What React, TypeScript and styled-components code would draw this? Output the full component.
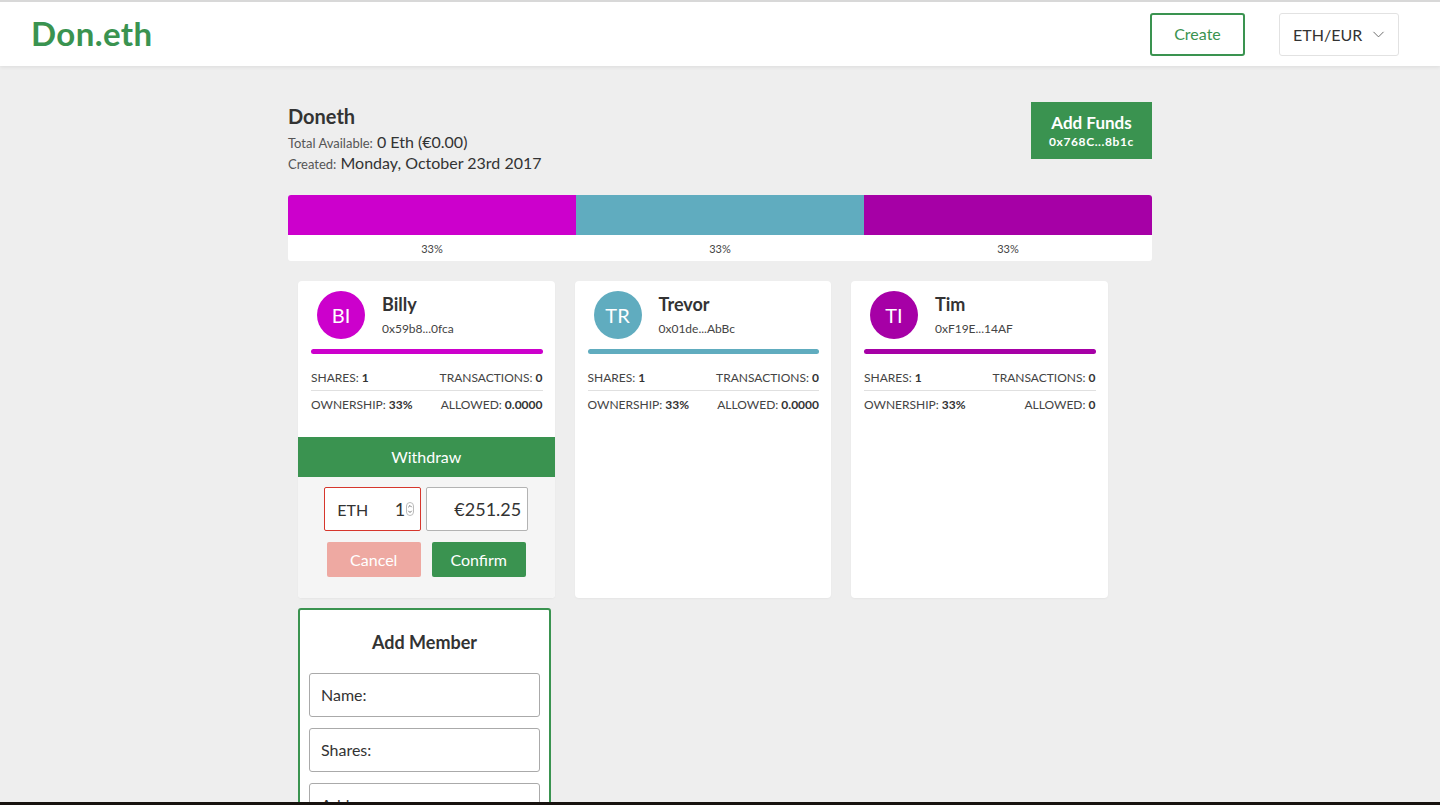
import React from 'react';
import styled, { createGlobalStyle } from 'styled-components';
import { ChevronDown } from 'lucide-react';

const GREEN = '#3a9350';

const GlobalStyle = createGlobalStyle`
  html, body {
    margin: 0;
    padding: 0;
    background: #eeeeee;
    font-family: Lato, "Open Sans", "Liberation Sans", sans-serif;
    color: #333;
  }
  * { box-sizing: border-box; }
`;

interface Member {
  name: string;
  initials: string;
  address: string;
  color: string;
  allowed: string;
  withdraw?: boolean;
}

const members: Member[] = [
  { name: 'Billy', initials: 'BI', address: '0x59b8...0fca', color: '#cc00cc', allowed: '0.0000', withdraw: true },
  { name: 'Trevor', initials: 'TR', address: '0x01de...AbBc', color: '#60acbf', allowed: '0.0000' },
  { name: 'Tim', initials: 'TI', address: '0xF19E...14AF', color: '#a600a6', allowed: '0' },
];

const Page = {
  Frame: styled.div`
    height: 100vh;
    overflow: hidden;
    background: #eeeeee;
    border-top: 2px solid #d8d8d8;
    border-bottom: 3px solid #17120f;
  `,
  Header: styled.header`
    display: flex;
    align-items: center;
    height: 64px;
    padding: 0 41px 0 31px;
    background: #fff;
    box-shadow: 0 1px 4px rgba(0, 0, 0, 0.08);
  `,
  Logo: styled.h1`
    margin: 0 0 2px;
    flex: 1;
    font-size: 33px;
    font-weight: 700;
    color: ${GREEN};
    letter-spacing: 0.4px;
  `,
  CreateButton: styled.button`
    width: 95px;
    height: 43px;
    margin-right: 34px;
    border: 2px solid ${GREEN};
    border-radius: 3px;
    background: #fff;
    color: ${GREEN};
    font-family: inherit;
    font-size: 16px;
    padding-bottom: 2px;
  `,
  Select: styled.div`
    display: flex;
    align-items: center;
    justify-content: space-between;
    width: 120px;
    height: 43px;
    padding: 0 10px 0 13px;
    border: 1px solid #e2e2e2;
    border-radius: 3px;
    font-size: 16px;
    color: #333;
  `,
  Main: styled.main`
    width: 864px;
    margin: 0 auto;
    padding-top: 36px;
  `,
};

const Summary = {
  Row: styled.div`
    display: flex;
    justify-content: space-between;
    align-items: flex-start;
  `,
  Title: styled.h2`
    margin: 0 0 2px;
    padding-top: 1px;
    font-size: 20px;
    font-weight: 700;
    line-height: 26px;
  `,
  Line: styled.div`
    height: 21px;
    font-size: 16px;
    line-height: 21px;
    color: #333;
  `,
  Label: styled.span`
    font-size: 13px;
    line-height: 1;
    color: #555;
  `,
  FundsButton: styled.div`
    display: flex;
    flex-direction: column;
    align-items: center;
    justify-content: center;
    width: 121px;
    height: 57px;
    background: ${GREEN};
    color: #fff;
  `,
  FundsTitle: styled.span`
    font-size: 17px;
    font-weight: 700;
    line-height: 22px;
  `,
  FundsAddress: styled.span`
    font-size: 12px;
    font-weight: 700;
    letter-spacing: 0.6px;
    line-height: 16px;
  `,
};

const Shares = {
  Wrap: styled.div`
    margin-top: 22px;
    border-radius: 3px;
    overflow: hidden;
    background: #fff;
  `,
  Bars: styled.div`
    display: flex;
    height: 40px;
  `,
  Segment: styled.div<{ $color: string }>`
    flex: 1;
    background: ${(p) => p.$color};
  `,
  Labels: styled.div`
    display: flex;
    height: 26px;
    align-items: center;
  `,
  Percent: styled.span`
    flex: 1;
    text-align: center;
    font-size: 11px;
    color: #444;
  `,
};

const Cards = {
  Grid: styled.div`
    display: flex;
    flex-wrap: wrap;
    padding: 15px 0 0;
  `,
  Card: styled.div`
    display: flex;
    flex-direction: column;
    width: 256.5px;
    margin: 5px 10px;
    border-radius: 4px;
    background: #fff;
    box-shadow: 0 1px 2px rgba(0, 0, 0, 0.04);
  `,
  Body: styled.div`
    padding: 10px 12px 20px 13px;
  `,
  Head: styled.div`
    display: flex;
    align-items: center;
    padding-left: 6px;
  `,
  Avatar: styled.div<{ $color: string }>`
    display: flex;
    align-items: center;
    justify-content: center;
    width: 48px;
    height: 48px;
    border-radius: 50%;
    background: ${(p) => p.$color};
    color: #fff;
    font-size: 20px;
  `,
  Who: styled.div`
    margin-left: 17px;
  `,
  Name: styled.div`
    font-size: 18px;
    font-weight: 700;
    line-height: 22px;
  `,
  Address: styled.div`
    font-size: 12px;
    line-height: 16px;
    margin-top: 6px;
    color: #444;
  `,
  ColorBar: styled.div<{ $color: string }>`
    height: 5px;
    margin-top: 10px;
    border-radius: 3px;
    background: ${(p) => p.$color};
  `,
  Stat: styled.div<{ $first?: boolean }>`
    display: flex;
    justify-content: space-between;
    align-items: center;
    height: ${(p) => (p.$first ? '28px' : '26px')};
    padding-top: ${(p) => (p.$first ? '2px' : '0')};
    margin-top: ${(p) => (p.$first ? '9px' : '0')};
    border-bottom: ${(p) => (p.$first ? '1px solid #e0e0e0' : 'none')};
    font-size: 12px;
    color: #444;
    b { color: #333; }
  `,
};

const Withdraw = {
  Wrap: styled.div`
    margin-top: auto;
    border-radius: 0 0 4px 4px;
    background: #f5f5f5;
    overflow: hidden;
  `,
  Head: styled.div`
    height: 40px;
    line-height: 40px;
    text-align: center;
    background: ${GREEN};
    color: #fff;
    font-size: 16px;
  `,
  Inputs: styled.div`
    display: flex;
    justify-content: center;
    gap: 5px;
    padding: 10px 0 11px;
  `,
  Field: styled.div<{ $error?: boolean; $width: number }>`
    display: flex;
    align-items: center;
    justify-content: space-between;
    width: ${(p) => p.$width}px;
    height: 44px;
    padding: 0 6px 0 12px;
    border: 1px solid ${(p) => (p.$error ? '#d6362c' : '#b3b3b3')};
    border-radius: 2px;
    background: #fff;
    font-size: 16px;
    color: #333;
  `,
  Amount: styled.span`
    display: flex;
    align-items: center;
    gap: 1px;
    font-size: 18px;
  `,
  Euro: styled.span`
    margin-left: auto;
    font-size: 18px;
  `,
  Buttons: styled.div`
    display: flex;
    justify-content: center;
    gap: 11px;
    padding-bottom: 21px;
  `,
  Button: styled.button<{ $variant: 'cancel' | 'confirm' }>`
    width: 94px;
    height: 35px;
    border: none;
    border-radius: 2px;
    background: ${(p) => (p.$variant === 'cancel' ? '#eea9a2' : GREEN)};
    color: #fff;
    font-family: inherit;
    font-size: 16px;
  `,
};

const AddMember = {
  Card: styled.div`
    width: 253px;
    margin: 5px 10px;
    padding: 0 9px 20px;
    border: 2px solid ${GREEN};
    border-radius: 3px;
    background: #fff;
  `,
  Title: styled.h3`
    margin: 0;
    padding: 20px 0 19px;
    text-align: center;
    font-size: 18px;
    font-weight: 700;
    line-height: 24px;
  `,
  Input: styled.div`
    height: 44px;
    margin-bottom: 11px;
    padding: 0 11px;
    border: 1px solid #aaa;
    border-radius: 3px;
    font-size: 16px;
    line-height: 42px;
    color: #333;
  `,
};

const Spinner: React.FC = () => (
  <svg width="8" height="14" viewBox="0 0 8 14">
    <rect x="0.5" y="0.5" width="7" height="13" rx="3.5" fill="#fff" stroke="#bbb" />
    <path d="M2.3 5.2 L4 3.5 L5.7 5.2" stroke="#666" strokeWidth="0.9" fill="none" />
    <path d="M2.3 8.8 L4 10.5 L5.7 8.8" stroke="#666" strokeWidth="0.9" fill="none" />
  </svg>
);

const MemberCard: React.FC<{ m: Member }> = ({ m }) => (
  <Cards.Card>
    <Cards.Body>
      <Cards.Head>
        <Cards.Avatar $color={m.color}>{m.initials}</Cards.Avatar>
        <Cards.Who>
          <Cards.Name>{m.name}</Cards.Name>
          <Cards.Address>{m.address}</Cards.Address>
        </Cards.Who>
      </Cards.Head>
      <Cards.ColorBar $color={m.color} />
      <Cards.Stat $first>
        <span>SHARES: <b>1</b></span>
        <span>TRANSACTIONS: <b>0</b></span>
      </Cards.Stat>
      <Cards.Stat>
        <span>OWNERSHIP: <b>33%</b></span>
        <span>ALLOWED: <b>{m.allowed}</b></span>
      </Cards.Stat>
    </Cards.Body>
    {m.withdraw && (
      <Withdraw.Wrap>
        <Withdraw.Head>Withdraw</Withdraw.Head>
        <Withdraw.Inputs>
          <Withdraw.Field $error $width={97}>
            <span>ETH</span>
            <Withdraw.Amount>1<Spinner /></Withdraw.Amount>
          </Withdraw.Field>
          <Withdraw.Field $width={102}>
            <Withdraw.Euro>€251.25</Withdraw.Euro>
          </Withdraw.Field>
        </Withdraw.Inputs>
        <Withdraw.Buttons>
          <Withdraw.Button $variant="cancel">Cancel</Withdraw.Button>
          <Withdraw.Button $variant="confirm">Confirm</Withdraw.Button>
        </Withdraw.Buttons>
      </Withdraw.Wrap>
    )}
  </Cards.Card>
);

const App: React.FC = () => {
  return (
    <Page.Frame>
      <GlobalStyle />
      <Page.Header>
        <Page.Logo>Don.eth</Page.Logo>
        <Page.CreateButton>Create</Page.CreateButton>
        <Page.Select>
          <span>ETH/EUR</span>
          <ChevronDown size={19} strokeWidth={1.2} color="#666" />
        </Page.Select>
      </Page.Header>
      <Page.Main>
        <Summary.Row>
          <div>
            <Summary.Title>Doneth</Summary.Title>
            <Summary.Line><Summary.Label>Total Available:</Summary.Label> 0 Eth (€0.00)</Summary.Line>
            <Summary.Line><Summary.Label>Created:</Summary.Label> Monday, October 23rd 2017</Summary.Line>
          </div>
          <Summary.FundsButton>
            <Summary.FundsTitle>Add Funds</Summary.FundsTitle>
            <Summary.FundsAddress>0x768C...8b1c</Summary.FundsAddress>
          </Summary.FundsButton>
        </Summary.Row>
        <Shares.Wrap>
          <Shares.Bars>
            {members.map((m) => <Shares.Segment key={m.name} $color={m.color} />)}
          </Shares.Bars>
          <Shares.Labels>
            {members.map((m) => <Shares.Percent key={m.name}>33%</Shares.Percent>)}
          </Shares.Labels>
        </Shares.Wrap>
        <Cards.Grid>
          {members.map((m) => <MemberCard key={m.name} m={m} />)}
          <AddMember.Card>
            <AddMember.Title>Add Member</AddMember.Title>
            <AddMember.Input>Name:</AddMember.Input>
            <AddMember.Input>Shares:</AddMember.Input>
            <AddMember.Input>Address:</AddMember.Input>
          </AddMember.Card>
        </Cards.Grid>
      </Page.Main>
    </Page.Frame>
  );
};

export default App;
